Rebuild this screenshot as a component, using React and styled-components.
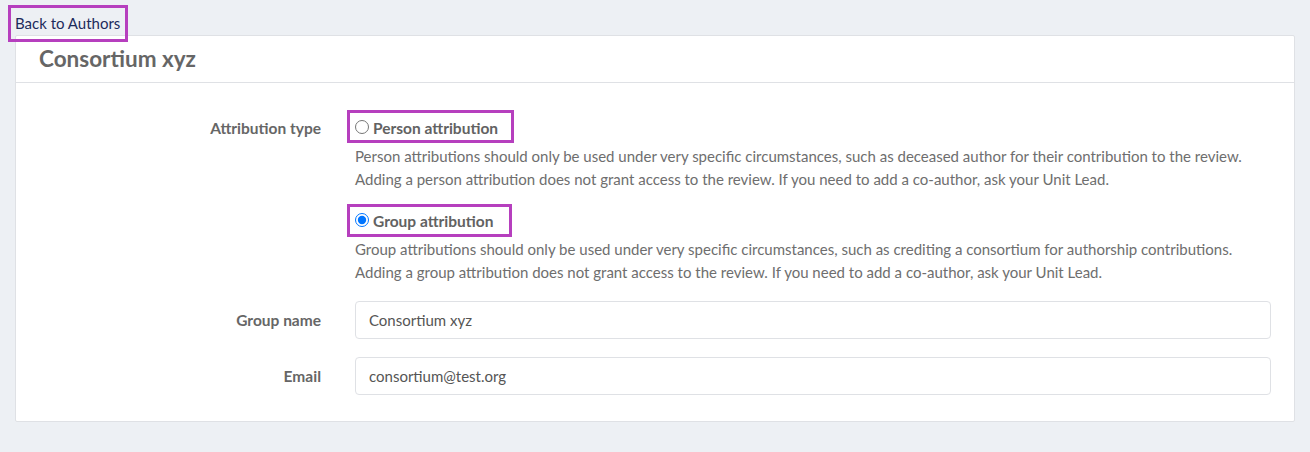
import React from "react";
import styled, { createGlobalStyle } from "styled-components";

const GlobalStyle = createGlobalStyle`
  html, body {
    margin: 0;
    background: #edf0f4;
  }
  body {
    font-family: "Lato", "Liberation Sans", sans-serif;
    font-size: 15px;
    color: #6b6b6b;
  }
  * { box-sizing: border-box; }
`;

const Page = styled.div`
  padding: 12px 15px 30px 15px;
`;

const TopBar = styled.div`
  height: 22px;
  margin-bottom: 1px;
`;

const Highlight = styled.span`
  display: inline-flex;
  align-items: center;
  position: relative;
  z-index: 1;
  padding: ${(p) => p.$pad};
  margin: ${(p) => p.$pad.split(" ").map((v) => (v === "0" ? "0" : "-" + v)).join(" ")};
  outline: 3px solid #b63fbe;
`;

const BackLink = styled.a`
  font-size: 15px;
  line-height: 22px;
  color: #1c2b5c;
  text-decoration: none;
  white-space: nowrap;
`;

const Card = styled.section`
  background: #fff;
  border: 1px solid #dfe1e5;
  border-radius: 2px;
`;

const CardHeader = styled.header`
  height: 47px;
  display: flex;
  align-items: center;
  padding: 0 23px;
  border-bottom: 1px solid #dfe1e5;
`;

const Title = styled.h2`
  margin: 0;
  font-size: 22.5px;
  font-weight: 700;
  color: #666;
  line-height: 1;
`;

const CardBody = styled.div`
  padding: 34px 23px 26px 0;
  display: flex;
  flex-direction: column;
  gap: 17px;
`;

const FormRow = styled.div`
  display: grid;
  grid-template-columns: 305px 1fr;
  column-gap: 34px;
  align-items: ${(p) => p.$align || "start"};
  margin-top: ${(p) => p.$mt || "0"};
`;

const Label = styled.label`
  text-align: right;
  font-weight: 700;
  font-size: 15.5px;
  line-height: 22px;
  color: #666;
  white-space: nowrap;
`;

const Options = styled.div`
  display: flex;
  flex-direction: column;
`;

const Option = styled.div`
  margin-top: ${(p) => p.$mt || "0"};
`;

const OptionLine = styled.label`
  display: inline-flex;
  align-items: flex-start;
  font-weight: 700;
  font-size: 15.5px;
  line-height: 22px;
  color: #626262;
  white-space: nowrap;
  cursor: pointer;
`;

const Radio = styled.input.attrs({ type: "radio" })`
  width: 14px;
  height: 14px;
  margin: 3px 4px 0 0;
  flex: none;
`;

const Help = styled.div`
  margin-top: 6px;
  font-size: 15px;
  line-height: 23px;
  color: #6e6e6e;
`;

const HelpLine = styled.div`
  white-space: nowrap;
`;

const TextInput = styled.input`
  display: block;
  width: 100%;
  height: 38px;
  padding: 0 13px;
  border: 1px solid #dfe1e5;
  border-radius: 4px;
  font-family: "Lato", "Liberation Sans", sans-serif;
  font-size: 15px;
  color: #555;
  background: #fff;
  outline: none;
`;

export default function App() {
  const [type, setType] = React.useState("group");
  return (
    <>
      <GlobalStyle />
      <Page>
        <TopBar>
          <Highlight $pad="4px 5px 5px 4px">
            <BackLink href="#">Back to Authors</BackLink>
          </Highlight>
        </TopBar>
        <Card>
          <CardHeader>
            <Title>Consortium xyz</Title>
          </CardHeader>
          <CardBody>
            <FormRow>
              <Label>Attribution type</Label>
              <Options>
                <Option>
                  <Highlight $pad="4px 13px 1px 5px">
                    <OptionLine>
                      <Radio
                        name="attr"
                        checked={type === "person"}
                        onChange={() => setType("person")}
                      />
                      Person attribution
                    </OptionLine>
                  </Highlight>
                  <Help>
                    <HelpLine>
                      Person attributions should only be used under very specific circumstances, such as deceased author for their contribution to the review.
                    </HelpLine>
                    <HelpLine>
                      Adding a person attribution does not grant access to the review. If you need to add a co-author, ask your Unit Lead.
                    </HelpLine>
                  </Help>
                </Option>
                <Option $mt="19px">
                  <Highlight $pad="3px 16px 2px 5px">
                    <OptionLine>
                      <Radio
                        name="attr"
                        checked={type === "group"}
                        onChange={() => setType("group")}
                      />
                      Group attribution
                    </OptionLine>
                  </Highlight>
                  <Help>
                    <HelpLine>
                      Group attributions should only be used under very specific circumstances, such as crediting a consortium for authorship contributions.
                    </HelpLine>
                    <HelpLine>
                      Adding a group attribution does not grant access to the review. If you need to add a co-author, ask your Unit Lead.
                    </HelpLine>
                  </Help>
                </Option>
              </Options>
            </FormRow>
            <FormRow $align="center">
              <Label htmlFor="group-name">Group name</Label>
              <TextInput id="group-name" defaultValue="Consortium xyz" />
            </FormRow>
            <FormRow $align="center" $mt="1px">
              <Label htmlFor="email">Email</Label>
              <TextInput id="email" type="email" defaultValue="consortium@test.org" />
            </FormRow>
          </CardBody>
        </Card>
      </Page>
    </>
  );
}
